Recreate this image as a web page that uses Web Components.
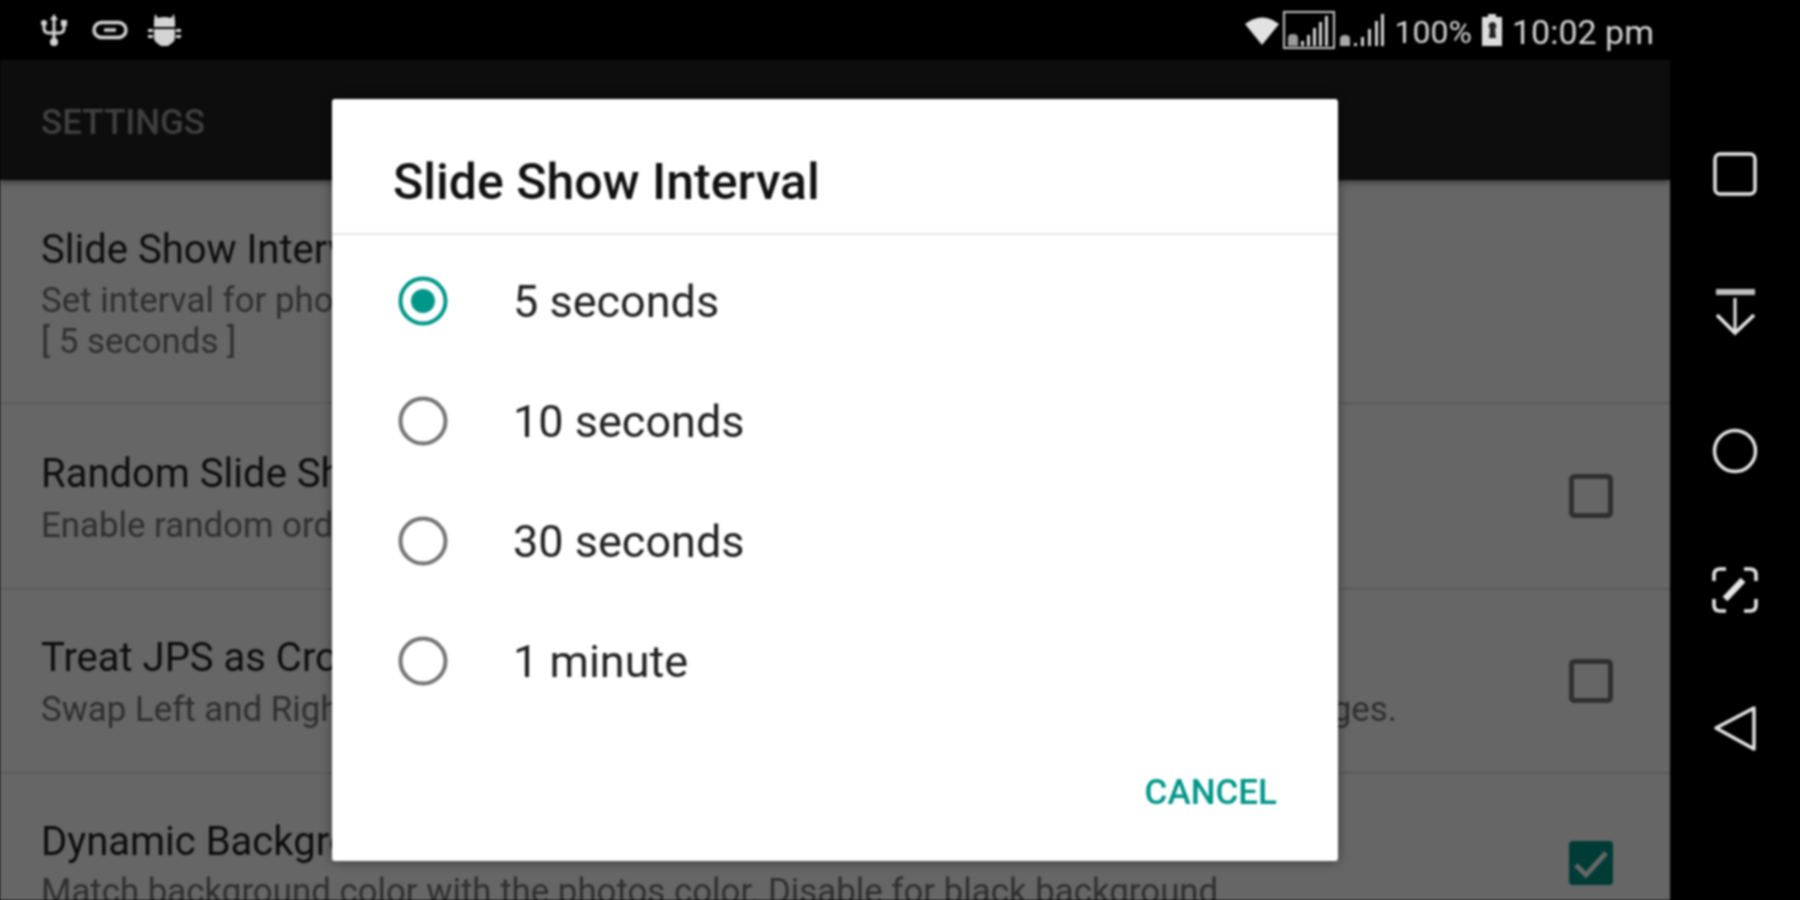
<!DOCTYPE html>
<html>
<head>
<meta charset="utf-8">
<title>Settings</title>
<style>
  html,body{ margin:0; height:100%; background:#000; overflow:hidden; }
  body{ font-family:Roboto,"Liberation Sans",sans-serif; }
</style>
</head>
<body>

<phone-screen>
  <status-bar slot="status"></status-bar>
  <app-bar slot="content">SETTINGS</app-bar>
  <settings-list slot="content">
    <settings-row style="--row-h:224px;--title-top:45px;--sub-gap:5px">
      <span slot="title">Slide Show Interval</span>
      Set interval for photos<br>[ 5 seconds ]
    </settings-row>
    <settings-row check="off" style="--row-h:186px;--title-top:45px">
      <span slot="title">Random Slide Show</span>
      Enable random order
    </settings-row>
    <settings-row check="off" style="--row-h:184px">
      <span slot="title">Treat JPS as Cross-eyed</span>
      Swap Left and Right for Cross-eyed stereo JPEG photos instead of Parallel view images.
    </settings-row>
    <settings-row check="on" style="--row-h:180px;--sub-gap:4px">
      <span slot="title">Dynamic Background</span>
      Match background color with the photos color. Disable for black background
    </settings-row>
  </settings-list>
  <modal-dialog slot="overlay">
    <span slot="heading">Slide Show Interval</span>
    <radio-row checked>5 seconds</radio-row>
    <radio-row>10 seconds</radio-row>
    <radio-row>30 seconds</radio-row>
    <radio-row>1 minute</radio-row>
    <span slot="action">CANCEL</span>
  </modal-dialog>
  <nav-rail slot="nav"></nav-rail>
</phone-screen>

<script>
(() => {
  const define = (name, html) => {
    customElements.define(name, class extends HTMLElement {
      constructor() {
        super();
        this.attachShadow({ mode: 'open' }).innerHTML = html;
      }
    });
  };

  define('phone-screen', `
    <style>
      :host{ display:grid; grid-template-columns:1670px 130px; width:1800px; height:900px; background:#000; filter:blur(.8px); overflow:hidden; }
      .main{ position:relative; display:flex; flex-direction:column; height:900px; overflow:hidden; }
      .dim{ position:absolute; inset:60px 0 0 0; background:rgba(0,0,0,.6); display:flex; align-items:center; justify-content:center; }
    </style>
    <div class="main">
      <slot name="status"></slot>
      <slot name="content"></slot>
      <div class="dim"><slot name="overlay"></slot></div>
    </div>
    <slot name="nav"></slot>
  `);

  define('status-bar', `
    <style>
      :host{ display:flex; align-items:center; height:60px; padding:0 16px 0 41px; background:#000; color:#d4d4d4; font-size:32px; flex:none; box-sizing:border-box; width:1670px; }
      svg{ display:block; flex:none; }
      .left{ display:flex; align-items:center; }
      .right{ display:flex; align-items:center; margin-left:auto; }
      .pct{ margin:4px 10px 0 10px; }
      .time{ margin:4px 0 0 10px; font-size:34px; }
    </style>
    <div class="left">
      <svg width="26" height="34" viewBox="0 0 26 34" fill="none" stroke="#d4d4d4" stroke-width="3">
        <path d="M13 3V30M3 12v3q0 5 5 5h10q5 0 5-5v-3"/>
        <path d="M13 1l-4 6h8z" fill="#d4d4d4" stroke="none"/>
        <circle cx="13" cy="29" r="4" fill="#d4d4d4" stroke="none"/>
        <circle cx="3" cy="10" r="3" fill="#d4d4d4" stroke="none"/>
        <rect x="20" y="7" width="6" height="6" fill="#d4d4d4" stroke="none"/>
      </svg>
      <svg style="margin-left:25px" width="36" height="20" viewBox="0 0 36 20" fill="none" stroke="#d4d4d4" stroke-width="3.4">
        <rect x="2" y="2.5" width="32" height="15" rx="7.5"/>
        <path d="M12 10h12"/>
      </svg>
      <svg style="margin-left:20px" width="33" height="34" viewBox="0 0 33 34" fill="#d4d4d4">
        <path d="M7 1l3 4q6-2 13 0l3-4 1 7v6H6V8z"/>
        <path d="M6 16h21v8q0 4-3 6l-4 3h-7l-4-3q-3-2-3-6z"/>
        <rect x="0" y="16" width="5" height="3"/><rect x="28" y="16" width="5" height="3"/>
        <rect x="0" y="22" width="5" height="3"/><rect x="28" y="22" width="5" height="3"/>
      </svg>
    </div>
    <div class="right">
      <svg width="34" height="30" viewBox="0 0 34 30" fill="#e2e2e2"><path d="M0 9Q17-4 34 9L17 30z"/></svg>
      <svg style="margin-left:4px" width="52" height="38" viewBox="0 0 52 38" fill="none" stroke="#c4c4c4">
        <rect x="1" y="1" width="50" height="36" stroke-width="2"/>
        <path d="M5 35v-8q0-4 5-4t5 4v8z" fill="#9a9a9a" stroke="none"/>
        <path d="M18 35v-5h3v5zM24 35V24h3v11zM30 35V17h3v18zM36 35V11h3v24zM42 35V5h3v30z" fill="#d0d0d0" stroke="none"/>
      </svg>
      <svg style="margin-left:4px" width="46" height="32" viewBox="0 0 46 32" fill="#d0d0d0">
        <path d="M1 32v-7q0-4 5-4t5 4v7z" fill="#a8a8a8"/>
        <path d="M15 32v-3h3v3zM22 32v-9h3v9zM29 32V15h3v17zM36 32V7h3v25zM42 32V0h3v32z"/>
      </svg>
      <span class="pct">100%</span>
      <svg width="20" height="32" viewBox="0 0 20 32"><path d="M6 0h8v3h6v29H0V3h6z" fill="#dcdcdc"/><path d="M10 8a4 4 0 0 1 3 7l1 9H7l1-9a4 4 0 0 1 2-7z" fill="#222"/></svg>
      <span class="time">10:02 pm</span>
    </div>
  `);

  define('app-bar', `
    <style>
      :host{ display:flex; align-items:center; height:120px; padding:5px 0 0 41px; box-sizing:border-box; background:#212121; color:#9e9e9e; font-size:35px; font-weight:500; flex:none; box-shadow:0 2px 6px rgba(0,0,0,.5); position:relative; }
    </style>
    <slot></slot>
  `);

  define('settings-list', `
    <style>
      :host{ display:block; flex:1; background:#fff; overflow:hidden; }
    </style>
    <slot></slot>
  `);

  define('settings-row', `
    <style>
      :host{ display:flex; align-items:center; height:var(--row-h); box-sizing:border-box; padding:0 57px 0 41px; border-bottom:2px solid #e0e0e0; }
      .text{ flex:1; min-width:0; align-self:flex-start; padding-top:var(--title-top,43px); }
      .title{ font-size:40px; line-height:50px; color:#212121; white-space:nowrap; }
      .sub{ font-size:34.85px; line-height:41px; color:#757575; white-space:nowrap; margin-top:var(--sub-gap,6px); }
      .box{ display:none; flex:none; width:44px; height:44px; }
      :host([check]) .box{ display:block; }
      :host([check="on"]) .off, :host([check="off"]) .on{ display:none; }
    </style>
    <div class="text">
      <div class="title"><slot name="title"></slot></div>
      <div class="sub"><slot></slot></div>
    </div>
    <svg class="box" viewBox="0 0 44 44">
      <rect class="off" x="2.5" y="2.5" width="39" height="39" rx="3" fill="none" stroke="#757575" stroke-width="5"/>
      <g class="on">
        <rect x="0" y="0" width="44" height="44" rx="4" fill="#009688"/>
        <path d="M7 24l10 10L37 12" fill="none" stroke="#fff" stroke-width="5"/>
      </g>
    </svg>
  `);

  define('modal-dialog', `
    <style>
      :host{ display:flex; flex-direction:column; width:1006px; height:762px; background:#fff; color:#212121; border-radius:3px; box-shadow:0 0 12px rgba(0,0,0,.45); }
      .heading{ height:136px; box-sizing:border-box; padding:58px 61px 0; font-size:50px; font-weight:500; line-height:50px; color:#111; border-bottom:2px solid #e4e4e4; flex:none; }
      .items{ padding-top:6px; flex:none; }
      .actions{ flex:1; display:flex; align-items:center; justify-content:flex-end; padding:2px 61px 0 0; color:#009688; font-size:35px; font-weight:500; }
    </style>
    <div class="heading"><slot name="heading"></slot></div>
    <div class="items"><slot></slot></div>
    <div class="actions"><slot name="action"></slot></div>
  `);

  define('radio-row', `
    <style>
      :host{ display:flex; align-items:center; gap:65px; height:120px; padding-left:66px; font-size:45px; color:#222; }
      svg{ flex:none; display:block; }
      .ring{ stroke:#757575; }
      .dot{ display:none; }
      :host([checked]) .ring{ stroke:#009688; }
      :host([checked]) .dot{ display:block; }
    </style>
    <svg width="50" height="50" viewBox="0 0 50 50">
      <circle class="ring" cx="25" cy="25" r="22.5" fill="none" stroke-width="4"/>
      <circle class="dot" cx="25" cy="25" r="12" fill="#009688"/>
    </svg>
    <span><slot></slot></span>
  `);

  define('nav-rail', `
    <style>
      :host{ display:block; background:#000; padding-top:105px; box-sizing:border-box; height:900px; }
      .cell{ height:138.5px; display:flex; align-items:center; justify-content:center; }
      svg{ display:block; }
      svg *{ fill:none; stroke:#e6e6e6; }
    </style>
    <div class="cell"><svg width="48" height="48" viewBox="0 0 48 48"><rect x="4" y="4" width="40" height="40" rx="5" stroke-width="3.4"/></svg></div>
    <div class="cell"><svg width="48" height="48" viewBox="0 0 48 48"><path d="M5 3h39" stroke-width="6" style="stroke:#bdbdbd"/><path d="M24 9v33" stroke-width="3"/><path d="M6 26l18 18 19-18" stroke-width="3.6"/></svg></div>
    <div class="cell"><svg width="48" height="48" viewBox="0 0 48 48"><circle cx="24" cy="24" r="20.5" stroke-width="3.4"/></svg></div>
    <div class="cell"><svg width="48" height="48" viewBox="0 0 48 48">
      <path d="M15 3H9q-6 0-6 6v6M33 3h6q6 0 6 6v6M3 33v6q0 6 6 6h6M45 33v6q0 6-6 6h-6" stroke-width="3.6"/>
      <path d="M14 33l18-19" stroke-width="6.5"/>
    </svg></div>
    <div class="cell"><svg width="48" height="48" viewBox="0 0 48 48"><path d="M43 4L5 24l38 21z" stroke-width="3.4" stroke-linejoin="round"/></svg></div>
  `);
})();
</script>
</body>
</html>
